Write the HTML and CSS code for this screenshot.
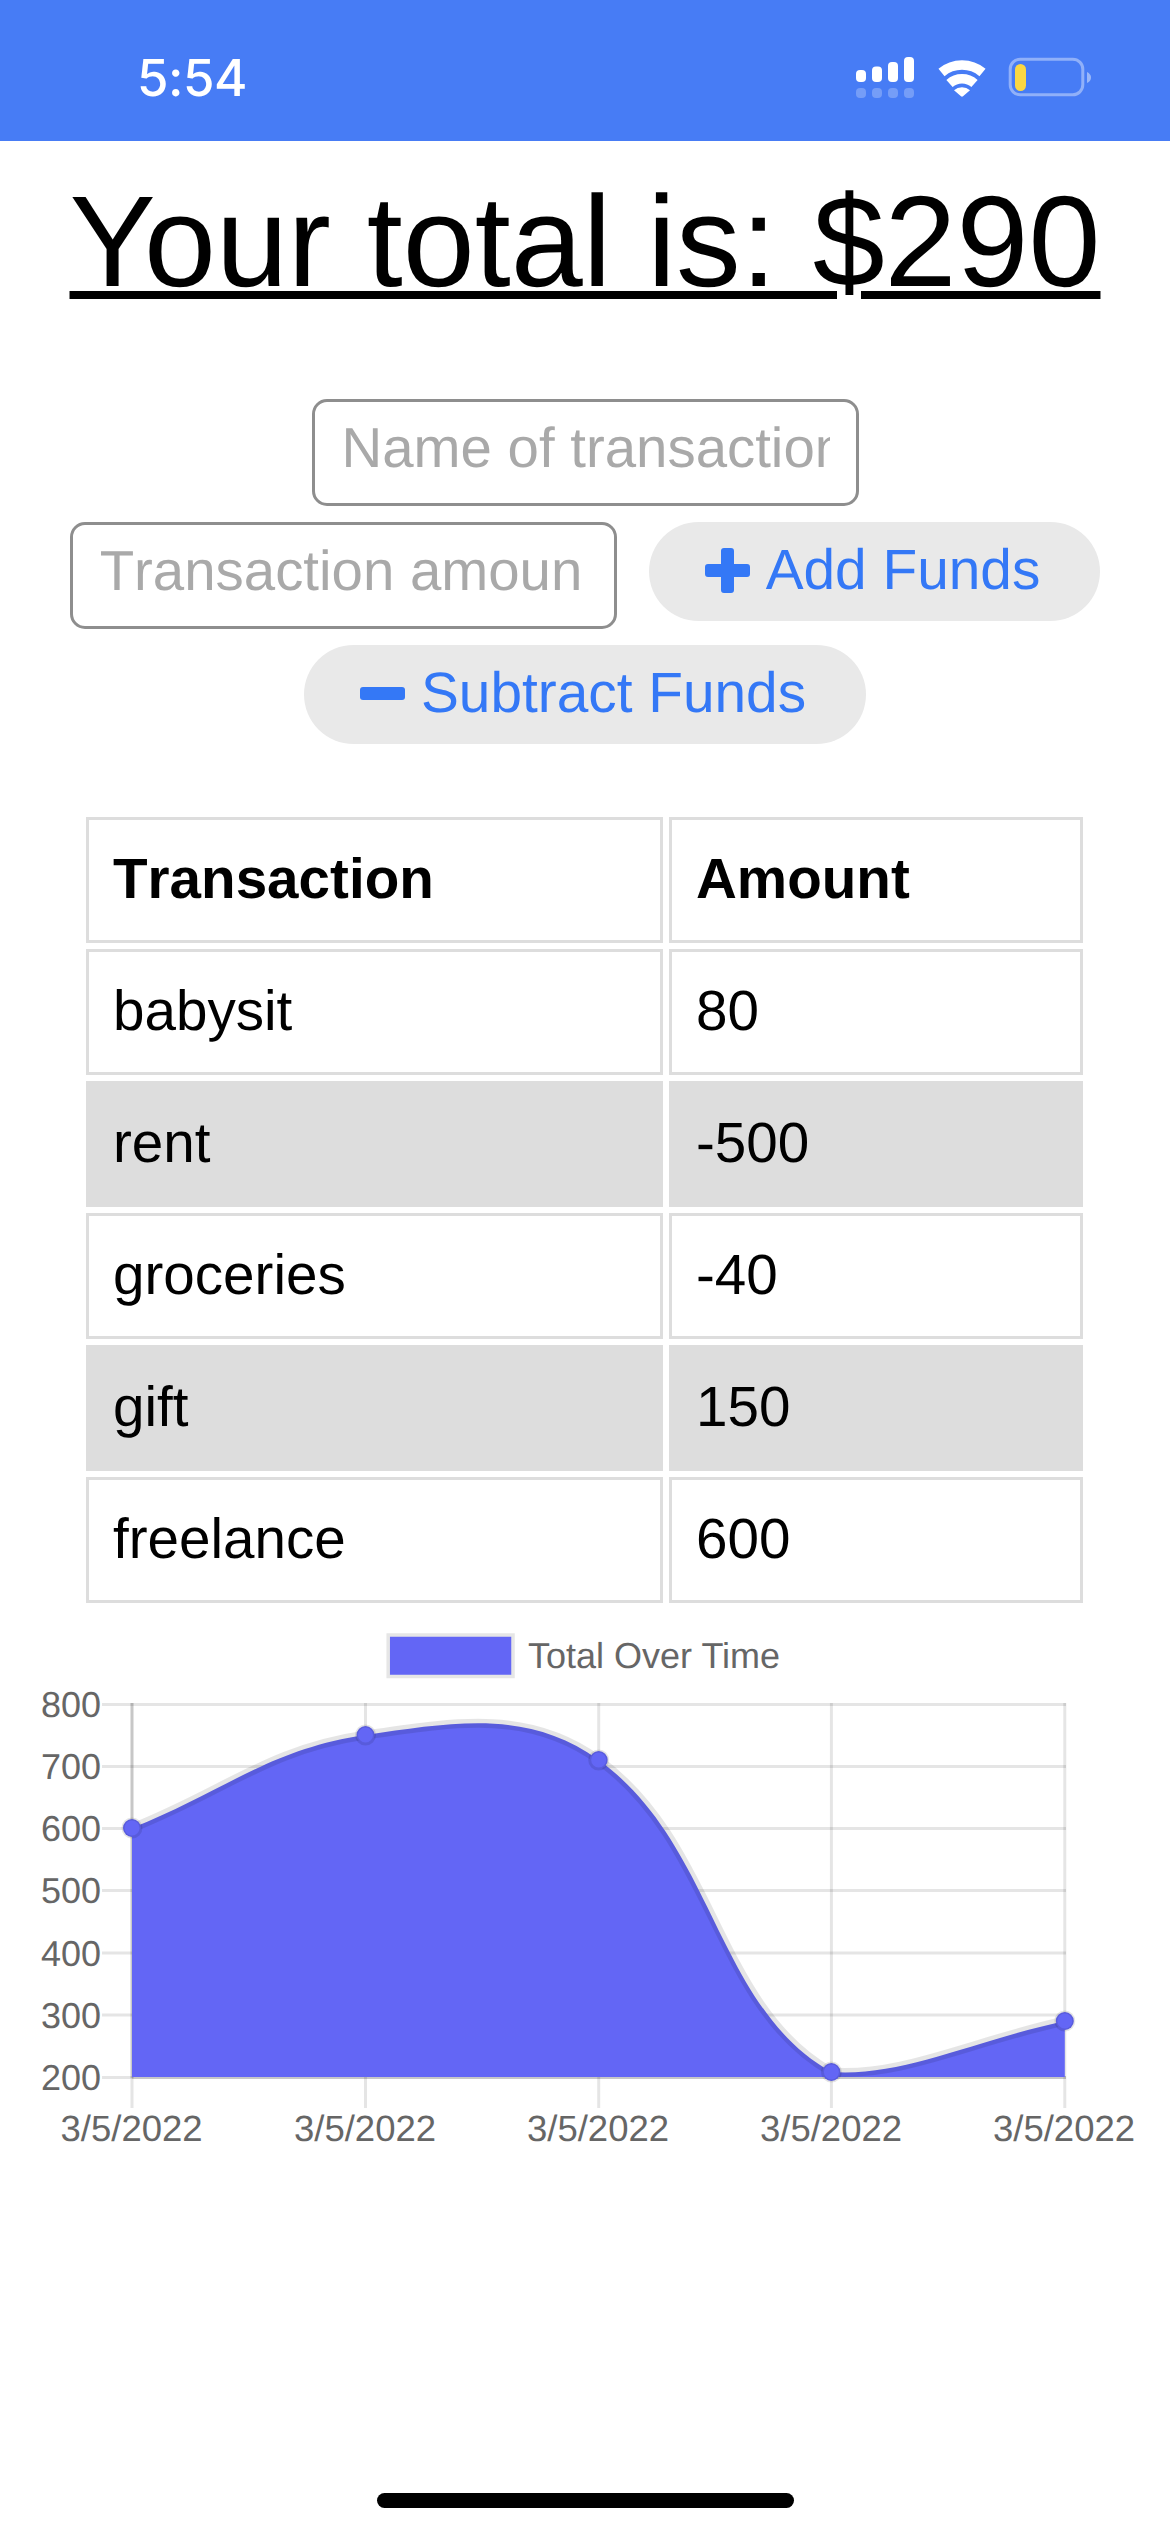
FILE: index.html
```html
<!DOCTYPE html>
<html lang="en">
<head>
<meta charset="utf-8">
<title>Budget Tracker</title>
<link rel="stylesheet" href="styles.css">
</head>
<body>
<header class="status-bar">
  <span class="time">5:54</span>
  <svg class="status-icons" viewBox="850 50 245 52" width="245" height="52" aria-hidden="true">
    <g class="bars">
      <rect x="856" y="70" width="10" height="12" rx="4"/>
      <rect x="872" y="66.5" width="10" height="15.5" rx="4"/>
      <rect x="888" y="62" width="10" height="20" rx="4"/>
      <rect x="904" y="57" width="10" height="25" rx="4"/>
    </g>
    <g class="bars-dim">
      <rect x="856" y="88" width="10" height="10" rx="4"/>
      <rect x="872" y="88" width="10" height="10" rx="4"/>
      <rect x="888" y="88" width="10" height="10" rx="4"/>
      <rect x="904" y="88" width="10" height="10" rx="4"/>
    </g>
    <path class="wifi-arc" d="M941.5 72.5A32 32 0 0 1 982.5 72.5"/>
    <path class="wifi-arc" d="M949.5 83.5A19 19 0 0 1 974.5 83.5"/>
    <path class="wifi-dot" d="M954 90.2A12 12 0 0 1 970 90.2L963 96.2A1.5 1.5 0 0 1 961 96.2Z"/>
    <rect class="batt-shell" x="1010.2" y="59.2" width="72.6" height="35.6" rx="10"/>
    <rect class="batt-level" x="1015" y="64" width="11" height="27" rx="5.5"/>
    <path class="batt-nub" d="M1087 72Q1091 74 1091 77.5Q1091 81 1087 83Z"/>
  </svg>
</header>

<main>
  <h1 class="total">Your total is: $290</h1>

  <form class="entry">
    <div class="entry-row">
      <input class="field" type="text" placeholder="Name of transaction">
    </div>
    <div class="entry-row">
      <input class="field field-amount" type="text" inputmode="numeric" placeholder="Transaction amount">
      <button class="pill pill-add" type="button">
        <svg class="pill-icon" viewBox="0 0 45 45" aria-hidden="true"><path d="M19 0h7a3 3 0 0 1 3 3v13h13a3 3 0 0 1 3 3v7a3 3 0 0 1-3 3H29v13a3 3 0 0 1-3 3h-7a3 3 0 0 1-3-3V29H3a3 3 0 0 1-3-3v-7a3 3 0 0 1 3-3h13V3a3 3 0 0 1 3-3z"/></svg>
        Add Funds
      </button>
    </div>
    <div class="entry-row">
      <button class="pill pill-sub" type="button">
        <svg class="pill-icon" viewBox="0 0 45 45" aria-hidden="true"><rect x="0" y="16" width="45" height="13" rx="3"/></svg>
        Subtract Funds
      </button>
    </div>
  </form>

  <table class="ledger">
    <thead>
      <tr><th>Transaction</th><th>Amount</th></tr>
    </thead>
    <tbody>
      <tr><td>babysit</td><td>80</td></tr>
      <tr><td>rent</td><td>-500</td></tr>
      <tr><td>groceries</td><td>-40</td></tr>
      <tr><td>gift</td><td>150</td></tr>
      <tr><td>freelance</td><td>600</td></tr>
    </tbody>
  </table>

  <svg class="chart" viewBox="0 1609 1170 560" width="1170" height="560" role="img" aria-label="Total Over Time">
    <rect class="legend-box" x="388.2" y="1635" width="124.8" height="41.5"/>
    <text class="chart-text legend-label" x="528" y="1668">Total Over Time</text>

    <g class="grid">
      <path d="M102 1704.5H1066"/>
      <path d="M102 1766.5H1066"/>
      <path d="M102 1828.5H1066"/>
      <path d="M102 1890.5H1066"/>
      <path d="M102 1953H1066"/>
      <path d="M102 2015H1066"/>
      <path d="M102 2077.5H132"/>
      <path d="M132 2078V2108"/>
      <path d="M365.5 1703V2108"/>
      <path d="M598.7 1703V2108"/>
      <path d="M831.4 1703V2108"/>
      <path d="M1064.8 1703V2108"/>
    </g>
    <g class="axis">
      <path d="M132 1703V2078"/>
      <path d="M132 2077.5H1066"/>
    </g>

    <path class="area" d="M132 1828C225.4 1790.8 268.9 1749.1 365.5 1735C455.6 1721.9 528.6 1709.3 598.7 1760C715 1844.1 715.9 2007.3 831.4 2072C902.3 2077 971.4 2041.4 1064.8 2021V2077H132Z"/>
    <path class="line" d="M132 1828C225.4 1790.8 268.9 1749.1 365.5 1735C455.6 1721.9 528.6 1709.3 598.7 1760C715 1844.1 715.9 2007.3 831.4 2072C902.3 2077 971.4 2041.4 1064.8 2021"/>
    <g class="points">
      <circle cx="132" cy="1828" r="9"/>
      <circle cx="365.5" cy="1735" r="9"/>
      <circle cx="598.7" cy="1760" r="9"/>
      <circle cx="831.4" cy="2072" r="9"/>
      <circle cx="1064.8" cy="2021" r="9"/>
    </g>

    <g class="y-labels chart-text">
      <text x="101" y="1717">800</text>
      <text x="101" y="1779">700</text>
      <text x="101" y="1841">600</text>
      <text x="101" y="1903">500</text>
      <text x="101" y="1966">400</text>
      <text x="101" y="2028">300</text>
      <text x="101" y="2090">200</text>
    </g>
    <g class="x-labels chart-text">
      <text x="131.6" y="2141">3/5/2022</text>
      <text x="365" y="2141">3/5/2022</text>
      <text x="598" y="2141">3/5/2022</text>
      <text x="831" y="2141">3/5/2022</text>
      <text x="1064" y="2141">3/5/2022</text>
    </g>
  </svg>
</main>

<div class="home-indicator"></div>
</body>
</html>
```

FILE: styles.css
```css
* {
  box-sizing: border-box;
}

html,
body {
  margin: 0;
  padding: 0;
  background: #fff;
}

body {
  position: relative;
  height: 2532px;
  overflow: hidden;
  font-family: "Liberation Sans", Arial, sans-serif;
  font-kerning: none;
  text-rendering: geometricPrecision;
  color: #000;
}

/* Status bar */
.status-bar {
  height: 141px;
  background: #477cf5;
  display: flex;
  align-items: center;
  justify-content: space-between;
  padding: 0 79px 0 137px;
}

.time {
  font-family: Inter, "Liberation Sans", sans-serif;
  font-weight: 500;
  font-size: 51px;
  letter-spacing: -0.5px;
  line-height: 60px;
  color: #fff;
  margin-top: 16px;
}

.status-icons {
  display: block;
  margin-top: 11px;
  margin-right: -4px;
}

.bars rect {
  fill: #fff;
}

.bars-dim rect {
  fill: #fff;
  opacity: 0.25;
}

.wifi-arc {
  fill: none;
  stroke: #fff;
  stroke-width: 9.5;
}

.wifi-dot {
  fill: #fff;
}

.batt-shell {
  fill: none;
  stroke: #fff;
  stroke-opacity: 0.4;
  stroke-width: 3;
}

.batt-level {
  fill: #fbd743;
}

.batt-nub {
  fill: #fff;
  opacity: 0.45;
}

/* Heading */
.total {
  margin: 28px 0 83px;
  font-size: 129.4px;
  font-kerning: normal;
  font-weight: 400;
  line-height: 147px;
  text-align: center;
  text-decoration: underline;
  text-decoration-thickness: 8px;
  text-underline-offset: 5px;
}

/* Form */
.entry {
  display: flex;
  flex-direction: column;
  gap: 16px;
  margin: 0 0 67px;
}

.entry-row {
  display: flex;
  justify-content: center;
  align-items: flex-start;
  gap: 32px;
}

.field {
  width: 547px;
  height: 107px;
  margin: 0;
  padding: 0 26px 10px 27px;
  background: #fff;
  border: 3px solid #8e8e8e;
  border-radius: 15px;
  font-family: inherit;
  font-size: 56.4px;
  font-kerning: none;
  text-rendering: geometricPrecision;
  color: #000;
  outline: none;
}

.field-amount {
  padding-right: 32px;
}

.field::placeholder {
  color: #a9a9a9;
  opacity: 1;
}

.pill {
  display: flex;
  align-items: center;
  gap: 16px;
  height: 99px;
  margin: 0;
  padding: 0 60px 2px 56px;
  background: #e9e9e9;
  border: 0;
  border-radius: 50px;
  font-family: inherit;
  font-size: 56.8px;
  font-kerning: none;
  text-rendering: geometricPrecision;
  color: #3478f6;
  white-space: nowrap;
}

.pill-icon {
  flex: none;
  width: 45px;
  height: 45px;
  fill: #3478f6;
}

/* Ledger */
.ledger {
  width: 1009px;
  margin: 0 0 0 80px;
  border-collapse: separate;
  border-spacing: 6px;
  table-layout: fixed;
  font-size: 56.6px;
}

.ledger th,
.ledger td {
  height: 126px;
  padding: 0 24px 3px;
  border: 3px solid #ddd;
  text-align: left;
  vertical-align: middle;
}

.ledger th {
  font-weight: 700;
}

.ledger th:first-child {
  width: 577px;
}

.ledger tbody tr:nth-child(even) td {
  background: #ddd;
}

/* Chart */
.chart {
  display: block;
}

.chart-text {
  font-family: "Liberation Sans", Arial, sans-serif;
  font-size: 36px;
  fill: #666;
}

.legend-label {
  font-kerning: normal;
}

.legend-box {
  fill: #6366f5;
  stroke: #e6e6e6;
  stroke-width: 3.5;
}

.grid path {
  fill: none;
  stroke: rgba(0, 0, 0, 0.1);
  stroke-width: 3;
}

.axis path {
  fill: none;
  stroke: rgba(0, 0, 0, 0.22);
  stroke-width: 3;
}

.area {
  fill: #6366f5;
}

.line {
  fill: none;
  stroke: rgba(0, 0, 0, 0.1);
  stroke-width: 9;
}

.points circle {
  fill: #6366f5;
  stroke: rgba(0, 0, 0, 0.1);
  stroke-width: 3;
}

.y-labels text {
  text-anchor: end;
}

.x-labels text {
  font-size: 36.5px;
  text-anchor: middle;
}

/* Home indicator */
.home-indicator {
  position: absolute;
  left: 377px;
  bottom: 24px;
  width: 417px;
  height: 15px;
  background: #000;
  border-radius: 8px;
}
```
